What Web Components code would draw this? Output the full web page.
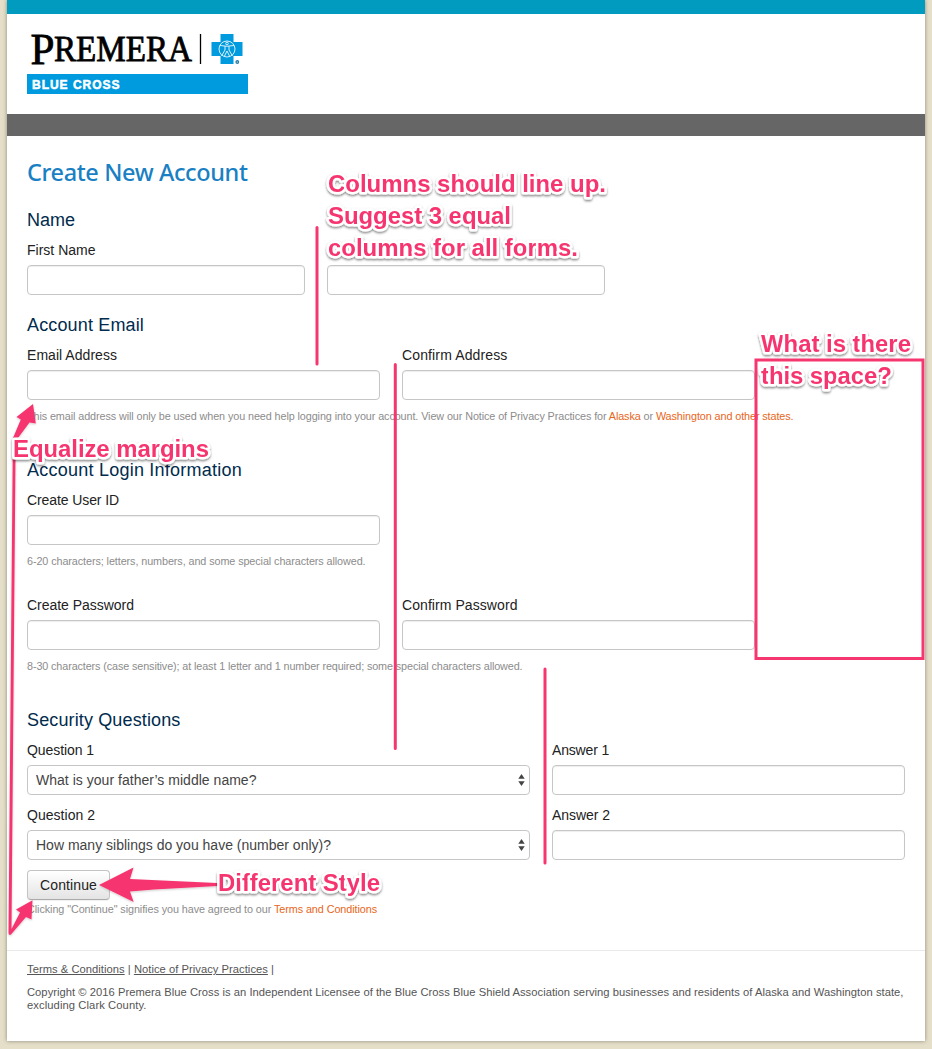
<!DOCTYPE html>
<html lang="en">
<head>
<meta charset="utf-8">
<title>Create New Account</title>
<style>
html{background:#e5dfc9}
body{margin:0;height:1049px;overflow:hidden;font:14px/20px "Liberation Sans",Arial,sans-serif;color:#333;background:#e5dfc9}
</style>
</head>
<body>
<account-page>
  <site-header></site-header>
  <account-form></account-form>
  <site-footer></site-footer>
  <review-notes></review-notes>
</account-page>
<script>
const component = (name, html, setup) => customElements.define(name, class extends HTMLElement {
  connectedCallback() {
    if (this.shadowRoot) return;
    this.attachShadow({mode: 'open'}).innerHTML = html;
    if (setup) setup(this, this.shadowRoot);
  }
});

component('account-page', `<style>
:host{display:flex;flex-direction:column;position:relative;width:918px;height:1041px;margin:0 7px;background:#fff;box-shadow:0 0 4px rgba(0,0,0,.4)}
</style><slot></slot>`);

component('site-header', `<style>
:host{display:block}
.top{height:14px;background:#009bbf}
.brand{height:100px;padding-left:20px}
.nav{height:22px;background:#666}
svg{display:block}
</style>
<div class="top"></div>
<div class="brand"><svg width="240" height="100" viewBox="27 14 240 100">
  <g font-family="Liberation Serif,serif" fill="#000" stroke="#000" stroke-width=".8">
    <text x="30.500" y="63.500" font-size="44" textLength="24" lengthAdjust="spacingAndGlyphs">P</text>
    <text x="54" y="60.500" font-size="35" textLength="138" lengthAdjust="spacingAndGlyphs">REMERA</text>
  </g>
  <path d="M200.500 34v30" stroke="#000" stroke-width="1.300"/>
  <path d="M220.500 34h13v8h9v14h-9v8h-13v-8h-9v-14h9z" fill="#009ade"/>
  <g fill="none" stroke="#d9f1fb" stroke-width="1">
    <circle cx="227" cy="49" r="8"/>
    <path d="M220 45.500q7 1.500 14 0M225 46v4l-3.500 6M229 46v4l3.500 6M224.500 56l2.500-5 2.500 5"/>
    <circle cx="227" cy="43.500" r="1.300"/>
  </g>
  <circle cx="237.300" cy="62" r="1.900" fill="#2a7ea5"/><circle cx="237.300" cy="62" r=".6" fill="#fff"/>
  <path fill="#009ade" d="M27 74h221v20H27z"/>
  <text x="32" y="88.700" font-family="Liberation Sans,sans-serif" font-size="12" font-weight="bold" fill="#fff" stroke="#fff" stroke-width=".5" textLength="87.500">BLUE CROSS</text>
</svg></div>
<div class="nav"></div>`);

component('form-section', `<style>
:host{display:block;margin-top:10px}
h2{margin:0;font-size:18px;line-height:30px;font-weight:400;color:#002b4d}
</style><h2><slot name="title"></slot></h2><slot></slot>`);

component('form-row', `<style>
:host{display:grid;column-gap:22px;margin-top:5px;padding-bottom:5px}
</style><slot></slot>`, (el) => { el.style.gridTemplateColumns = el.getAttribute('cols'); });

component('text-field', `<style>
:host{display:block}
label{display:block;height:20px;line-height:20px;margin-bottom:5px;color:#222}
input{display:block;box-sizing:border-box;width:100%;height:30px;margin:0;border:1px solid #c6c6c6;border-radius:4px;background:#fff;box-shadow:inset 0 1px 1px rgba(0,0,0,.07)}
</style><label><slot></slot></label><input>`);

component('select-field', `<style>
:host{display:block}
label{display:block;height:20px;line-height:20px;margin-bottom:5px;color:#222}
.box{box-sizing:border-box;height:30px;display:flex;align-items:center;justify-content:space-between;padding:0 4px 0 8px;border:1px solid #c6c6c6;border-radius:4px;color:#444}
svg{display:block}
</style><label><slot></slot></label><div class="box"><slot name="value"></slot><svg width="7" height="14" viewBox="0 0 7 14"><path d="M.3 5.700 3.500 1l3.200 4.700zM.3 8.300 3.500 13l3.200-4.700z" fill="#444"/></svg></div>`);

component('help-text', `<style>
:host{display:block;font-size:10.8px;line-height:20px;height:20px;color:#8c8c8c;white-space:nowrap}
</style><slot></slot>`);

component('submit-button', `<style>
:host{display:block;width:83px}
button{box-sizing:border-box;width:83px;height:30px;padding:0;border:1px solid #c4c4c4;border-bottom-color:#aaa;border-radius:4px;background:linear-gradient(#fff,#e4e4e4);font:inherit;color:#222;display:flex;align-items:center;justify-content:center;box-shadow:0 1px 1px rgba(0,0,0,.06)}
</style><button><slot></slot></button>`);

component('account-form', `<style>
:host{display:block;box-sizing:border-box;height:815px;padding:21px 20px 0;border-bottom:1px solid #e9e9e9}
h1{margin:0;font:500 23.500px/30px "Noto Sans",sans-serif;color:#1a80c4}
h1+form-section{margin-top:18px}
.c{color:#e8651a}
</style>
<h1><fit-text w="220.500">Create New Account</fit-text></h1>
<form-section><fit-text slot="title" w="48">Name</fit-text>
  <form-row cols="278px 278px"><text-field><fit-text w="68.500">First Name</fit-text></text-field><text-field></text-field></form-row>
</form-section>
<form-section><fit-text slot="title" w="117">Account Email</fit-text>
  <form-row cols="353px 353px"><text-field><fit-text w="90">Email Address</fit-text></text-field><text-field><fit-text w="105.500">Confirm Address</fit-text></text-field></form-row>
  <help-text style="margin-top:1px"><fit-text w="766.500">This email address will only be used when you need help logging into your account. View our Notice of Privacy Practices for <span class="c">Alaska</span> or <span class="c">Washington and other states.</span></fit-text></help-text>
</form-section>
<form-section style="margin-top:29px"><fit-text slot="title" w="215">Account Login Information</fit-text>
  <form-row cols="353px"><text-field><fit-text w="92">Create User ID</fit-text></text-field></form-row>
  <help-text style="margin-top:1px"><fit-text w="338.500">6-20 characters; letters, numbers, and some special characters allowed.</fit-text></help-text>
  <form-row cols="353px 353px" style="margin-top:24px"><text-field><fit-text w="107">Create Password</fit-text></text-field><text-field><fit-text w="115.500">Confirm Password</fit-text></text-field></form-row>
  <help-text style="margin-top:1px"><fit-text w="495.500">8-30 characters (case sensitive); at least 1 letter and 1 number required; some special characters allowed.</fit-text></help-text>
</form-section>
<form-section style="margin-top:29px"><fit-text slot="title" w="153.500">Security Questions</fit-text>
  <form-row cols="503px 353px"><select-field><fit-text w="67">Question 1</fit-text><fit-text slot="value" w="220.500">What is your father’s middle name?</fit-text></select-field><text-field><fit-text w="57">Answer 1</fit-text></text-field></form-row>
  <form-row cols="503px 353px"><select-field><fit-text w="68">Question 2</fit-text><fit-text slot="value" w="295">How many siblings do you have (number only)?</fit-text></select-field><text-field><fit-text w="58">Answer 2</fit-text></text-field></form-row>
</form-section>
<submit-button style="margin-top:5px"><fit-text w="57">Continue</fit-text></submit-button>
<help-text style="margin-top:-1px"><fit-text w="350">Clicking "Continue" signifies you have agreed to our <span class="c">Terms and Conditions</span></fit-text></help-text>`);

component('site-footer', `<style>
:host{display:block;padding:8px 20px 0;font-size:11.200px;line-height:13px;color:#555}
p{margin:0;white-space:nowrap}
.links{line-height:20px;margin-bottom:7px}
u{text-underline-offset:1px}
</style>
<p class="links"><fit-text w="247"><u>Terms &amp; Conditions</u> | <u>Notice of Privacy Practices</u> |</fit-text></p>
<p><fit-text w="876.500">Copyright © 2016 Premera Blue Cross is an Independent Licensee of the Blue Cross Blue Shield Association serving businesses and residents of Alaska and Washington state,</fit-text></p>
<p><fit-text w="119.500">excluding Clark County.</fit-text></p>`);

/* Review markup drawn over the form */
component('review-notes', `<style>
:host{display:block;position:absolute;left:-7px;top:0;width:932px;height:1049px;pointer-events:none}
svg{display:block}
text{font:bold 24px "Liberation Sans",Arial,sans-serif;fill:#f6366f;stroke:#fff;stroke-width:5px;stroke-linejoin:round;paint-order:stroke}
</style>
<svg width="932" height="1049" viewBox="0 0 932 1049">
  <defs><filter id="sh" x="-10%" y="-20%" width="120%" height="150%"><feDropShadow dx="0" dy="1.500" stdDeviation="1.300" flood-color="#000" flood-opacity=".5"/></filter>
  <filter id="soft" x="-10%" y="-20%" width="120%" height="150%"><feDropShadow dx="0" dy="1" stdDeviation="1" flood-color="#000" flood-opacity=".2"/></filter></defs>
  <g stroke="#f6366f" stroke-width="3" stroke-linecap="round" fill="none">
    <path d="M317 227.500V364M395.300 364.500V748.500M545 669V863"/>
    <path d="M756 360H923V658.500H756z" stroke-linejoin="miter"/>
  </g>
  <g fill="#f6366f" filter="url(#soft)">
    <path d="M12.700 456h2.800L11.500 929 20 912.500 16 909.500 32.500 900.300 31.500 919.500 26 917 11 934.500q-2.500 1.500-2.500-2z"/>
    <path d="M13 438 20.800 419.500 16.500 417 33 404 35.800 423.500 29.500 422.500 18 438z"/>
    <path d="M99 885 133.500 867.500 130 879 222 883.300v2.400L154 889.500 130 891.500 133.700 902z"/>
  </g>
  <g filter="url(#sh)">
    <text x="328" y="192" textLength="278">Columns should line up.</text>
    <text x="328" y="224" textLength="183">Suggest 3 equal</text>
    <text x="328" y="256" textLength="250">columns for all forms.</text>
    <text x="761" y="352" textLength="150">What is there</text>
    <text x="761" y="384" textLength="131">this space?</text>
    <text x="13" y="457" textLength="196">Equalize margins</text>
    <text x="218" y="891" textLength="162">Different Style</text>
  </g>
</svg>`);

/* A line of text tracked to a set measure */
component('fit-text', `<style>:host{display:inline-block;white-space:nowrap}</style><slot></slot>`, (el) => {
  const natural = el.getBoundingClientRect().width;
  el.style.letterSpacing = (el.getAttribute('w') - natural) / el.textContent.length + 'px';
});
</script>
</body>
</html>
